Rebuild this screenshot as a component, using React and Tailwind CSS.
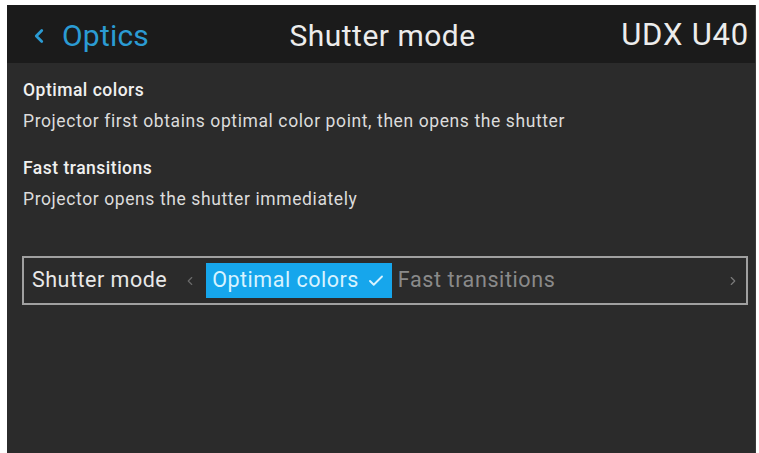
import { ChevronLeft, ChevronRight, Check } from 'lucide-react';

const modes = [
  {
    name: 'Optimal colors',
    text: 'Projector first obtains optimal color point, then opens the shutter',
  },
  {
    name: 'Fast transitions',
    text: 'Projector opens the shutter immediately',
  },
];

const App = () => {
  return (
    <div
      className="w-[759px] h-[453px] bg-white pt-[5px] pl-[7px] pr-[3px] overflow-hidden"
      style={{ fontFamily: 'Roboto, "Liberation Sans", sans-serif' }}
    >
      <div className="h-full flex flex-col bg-[#2b2b2b] border-r border-[#3a3a3a]">
        {/* HEADER */}
        <div className="h-[58px] shrink-0 bg-[#1b1b1b] flex items-center pl-[21px] pr-[6px] pt-[3px]">
          <div className="flex-1 flex items-center text-[#2b9bd3] text-[30px] tracking-[0.2px]">
            <ChevronLeft size={22} strokeWidth={3} className="mr-[12px]" />
            Optics
          </div>
          <div className="text-[30px] tracking-[0.5px] text-[#ececec] mr-[12px]">Shutter mode</div>
          <div className="flex-1 text-right text-[31px] tracking-[0.8px] text-[#ececec]">UDX U40</div>
        </div>

        {/* DESCRIPTIONS */}
        <div className="px-[16px] pt-[15px]">
          {modes.map((m) => (
            <div key={m.name} className="mb-[23px]">
              <div className="text-[17.5px] tracking-[0.5px] font-medium text-[#f0f0f0] leading-[24px]">{m.name}</div>
              <div className="text-[17.5px] tracking-[0.6px] text-[#dcdcdc] leading-[24px] mt-[7px]">{m.text}</div>
            </div>
          ))}
        </div>

        {/* SELECTOR */}
        <div className="ml-[15px] mr-[7px] mt-[22px] h-[49px] border-2 border-[#a0a0a0] flex items-center pl-[8px] pr-[6px]">
          <span className="text-[21.5px] tracking-[0.5px] text-[#e8e8e8]">Shutter mode</span>
          <ChevronLeft size={14} strokeWidth={2} className="text-[#6a6a6a] ml-[16px] mr-[9px]" />
          <div className="h-[35px] bg-[#16a6ec] flex items-center pl-[6px] pr-[7px] gap-[8px]">
            <span className="text-[21.5px] tracking-[0.5px] text-[#d8f3ff]">Optimal colors</span>
            <Check size={18} strokeWidth={2.5} className="text-[#d8f3ff]" />
          </div>
          <span className="text-[21.5px] tracking-[0.6px] text-[#8a8a8a] ml-[6px]">Fast transitions</span>
          <div className="flex-1" />
          <ChevronRight size={14} strokeWidth={2} className="text-[#7a7a7a]" />
        </div>
      </div>
    </div>
  );
};

export default App;
